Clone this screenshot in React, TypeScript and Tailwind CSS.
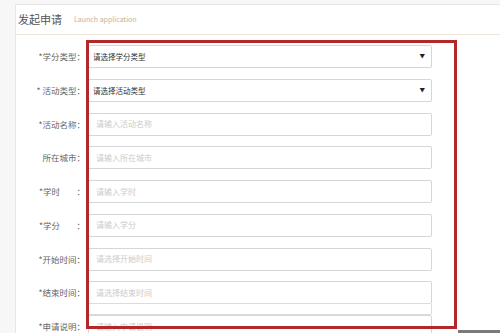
const font = { fontFamily: '"Noto Sans CJK SC", "Noto Sans", sans-serif' };

type Row = {
  label: string;
  star?: boolean;
  spaced?: boolean;
  kind: "select" | "input";
  text: string;
};

const rows: Row[] = [
  { label: "学分类型", star: true, kind: "select", text: "请选择学分类型" },
  { label: " 活动类型", star: true, kind: "select", text: "请选择活动类型" },
  { label: "活动名称", star: true, kind: "input", text: "请输入活动名称" },
  { label: "所在城市", kind: "input", text: "请输入所在城市" },
  { label: "学时", star: true, spaced: true, kind: "input", text: "请输入学时" },
  { label: "学分", star: true, spaced: true, kind: "input", text: "请输入学分" },
  { label: "开始时间", star: true, kind: "input", text: "请选择开始时间" },
  { label: "结束时间", star: true, kind: "input", text: "请选择结束时间" },
  { label: "申请说明", star: true, kind: "input", text: "请输入申请说明" },
];

function Label({ row }: { row: Row }) {
  const text = (row.star ? "*" : "") + row.label;
  if (row.spaced) {
    return (
      <div className="flex w-[46px] justify-between whitespace-pre">
        <span>{text}</span>
        <span>：</span>
      </div>
    );
  }
  return (
    <div className="flex w-[46px] justify-end whitespace-pre">
      {text}：
    </div>
  );
}

export default function App() {
  return (
    <div
      className="relative h-[333px] w-[500px] overflow-hidden bg-[#f7f7f7] pl-[15px] pt-[4px]"
      style={font}
    >
      <div className="h-full border-l border-t border-[#e6e6e6] bg-white">
        {/* Header */}
        <div className="flex h-[30px] items-center gap-[12px] border-b border-[#ece6da] pl-[2px]">
          <span className="text-[11px] text-[#555]">发起申请</span>
          <span className="text-[7px] text-[#bdb4a3]">Launch application</span>
        </div>

        {/* Form */}
        <div className="flex flex-col gap-[10.75px] pt-[10px]">
          {rows.map((row, i) => (
            <div key={i} className="flex items-center text-[8.5px] text-[#666]">
              <div className="flex w-[70px] justify-end pr-[1px]">
                <Label row={row} />
              </div>
              <div className="relative ml-[2px] h-[23px] w-[344px]">
                <div className="flex h-full items-center rounded-[2px] border border-[#d6d6d6] bg-white">
                  {row.kind === "select" ? (
                    <>
                      <span className="flex-1 pl-[4px] text-[7.5px] text-[#333]">{row.text}</span>
                      <span className="pr-[6px] text-[5.5px] text-[#222]">▼</span>
                    </>
                  ) : (
                    <span className="pl-[7px] text-[8px] text-[#cbcbcb]">{row.text}</span>
                  )}
                </div>
                {i === 7 && (
                  <div className="absolute left-0 top-[22px] h-[12px] w-full rounded-[2px] border border-[#dcdcdc] bg-white" />
                )}
              </div>
            </div>
          ))}
        </div>
      </div>

      {/* Red highlight annotation */}
      <div className="absolute left-[86px] top-[40px] h-[289px] w-[371px] border-[3px] border-[#b2282a]" />
      <div className="absolute left-[458px] top-[330px] h-[3px] w-[42px] bg-[#7a7a7a]" />
    </div>
  );
}
